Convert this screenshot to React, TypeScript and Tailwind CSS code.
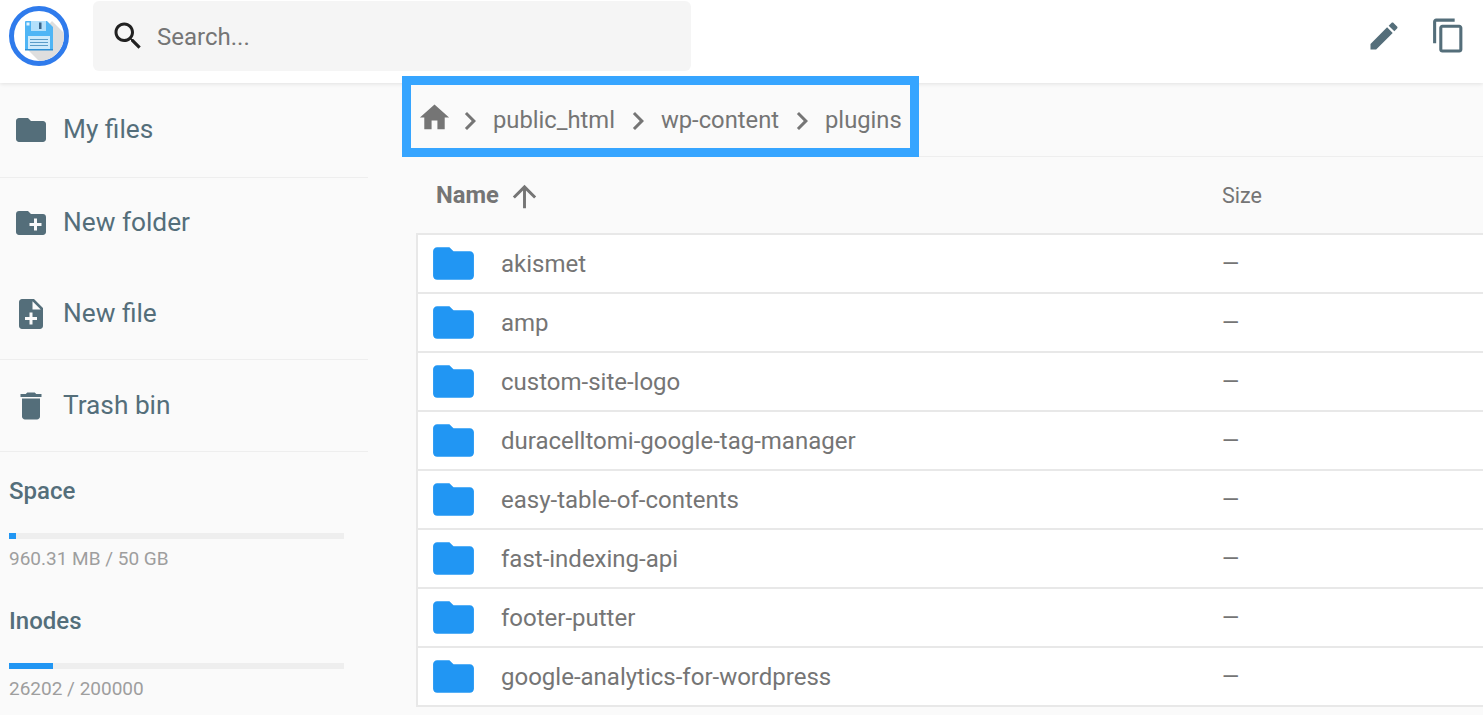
import React from 'react';

const paths = {
  folder: 'M10 4H4c-1.1 0-2 .9-2 2v12c0 1.1.9 2 2 2h16c1.1 0 2-.9 2-2V8c0-1.1-.9-2-2-2h-8l-2-2z',
  newFolder: 'M20 6h-8l-2-2H4c-1.11 0-1.99.89-1.99 2L2 18c0 1.11.89 2 2 2h16c1.11 0 2-.89 2-2V8c0-1.11-.89-2-2-2zm-1 8h-3v3h-2v-3h-3v-2h3V9h2v3h3v2z',
  newFile: 'M14 2H6c-1.1 0-1.99.9-1.99 2L4 20c0 1.1.89 2 1.99 2H18c1.1 0 2-.9 2-2V8l-6-6zm2 14h-3v3h-2v-3H8v-2h3v-3h2v3h3v2zm-3-7V3.5L18.5 9H13z',
  trash: 'M6 19c0 1.1.9 2 2 2h8c1.1 0 2-.9 2-2V7H6v12zM19 4h-3.5l-1-1h-5l-1 1H5v2h14V4z',
  home: 'M10 20v-6h4v6h5v-8h3L12 3 2 12h3v8z',
  search: 'M15.5 14h-.79l-.28-.27C15.41 12.59 16 11.11 16 9.5 16 5.91 13.09 3 9.5 3S3 5.91 3 9.5 5.91 16 9.5 16c1.61 0 3.09-.59 4.23-1.57l.27.28v.79l5 4.99L20.49 19l-4.99-5zm-6 0C7.01 14 5 11.99 5 9.5S7.01 5 9.5 5 14 7.01 14 9.5 11.99 14 9.5 14z',
  edit: 'M3 17.25V21h3.75L17.81 9.94l-3.75-3.75L3 17.25zM20.71 7.04c.39-.39.39-1.02 0-1.41l-2.34-2.34c-.39-.39-1.02-.39-1.41 0l-1.83 1.83 3.75 3.75 1.83-1.83z',
  copy: 'M16 1H4c-1.1 0-2 .9-2 2v14h2V3h12V1zm3 4H8c-1.1 0-2 .9-2 2v14c0 1.1.9 2 2 2h11c1.1 0 2-.9 2-2V7c0-1.1-.9-2-2-2zm0 16H8V7h11v14z',
  up: 'M4 12l1.41 1.41L11 7.83V20h2V7.83l5.58 5.59L20 12l-8-8-8 8z',
  chevron: 'M10 6L8.59 7.41 13.17 12l-4.58 4.59L10 18l6-6z',
};

const Icon = ({ d, className }: { d: string; className: string }) => (
  <svg viewBox="0 0 24 24" fill="currentColor" className={`shrink-0 ${className}`}>
    <path d={d} />
  </svg>
);

const Logo = () => (
  <div className="flex h-[60px] w-[60px] items-center justify-center overflow-hidden rounded-full border-[5px] border-[#2f7bec] bg-white">
    <svg viewBox="0 0 50 50" className="h-[50px] w-[50px]">
      <path d="M13 38 L38 10 L50 22 L50 50 L25 50 Z" fill="#dedede" />
      <path d="M12 10h21l6 6v22a1 1 0 0 1-1 1H12a1 1 0 0 1-1-1V11a1 1 0 0 1 1-1z" fill="#4fb5f5" />
      <rect x="17" y="10" width="15" height="10" fill="#b3e0fb" />
      <rect x="25" y="11.5" width="2.5" height="6.5" fill="#37648a" />
      <rect x="12.5" y="11.5" width="3" height="3" fill="#e3f4fe" />
      <rect x="14" y="25" width="22" height="13" fill="#cdeafc" />
      <rect x="16" y="28" width="18" height="1" fill="#5a9cc8" />
      <rect x="16" y="31" width="18" height="1" fill="#5a9cc8" />
      <rect x="16" y="34" width="18" height="1" fill="#5a9cc8" />
      <rect x="11" y="38" width="28" height="1.5" fill="#2c8fd6" />
    </svg>
  </div>
);

const SideItem = ({ d, label, height, line }: { d: string; label: string; height: string; line?: boolean }) => (
  <div className={`flex items-center ${height} ${line ? 'border-b border-[#eeeeee]' : ''}`}>
    <div className="flex w-[63px] justify-center pr-[1px]">
      <Icon d={d} className="h-9 w-9" />
    </div>
    <span className="text-[26.25px] text-[#546e7a]">{label}</span>
  </div>
);

const Meter = ({ title, pct, text }: { title: string; pct: number; text: string }) => (
  <div className="h-[130px] pl-[9px]">
    <div className="text-[24px] leading-[30px] font-medium text-[#546e7a]">{title}</div>
    <div className="mt-[27px] h-[6px] w-[335px] bg-[#eeeeee]">
      <div className="h-full bg-[#2196f3]" style={{ width: `${pct}%` }} />
    </div>
    <div className="mt-[7px] text-[19px] leading-[26px] text-[#9e9e9e]">{text}</div>
  </div>
);

const Crumb = ({ label }: { label: string }) => (
  <>
    <Icon d={paths.chevron} className="h-9 w-9 text-[#757575]" />
    <span className="px-[5px] text-[23.75px] whitespace-nowrap text-[#757575]">{label}</span>
  </>
);

const plugins = [
  'akismet',
  'amp',
  'custom-site-logo',
  'duracelltomi-google-tag-manager',
  'easy-table-of-contents',
  'fast-indexing-api',
  'footer-putter',
  'google-analytics-for-wordpress',
];

export default function App() {
  return (
    <div className="flex h-[715px] w-full flex-col overflow-hidden bg-[#fafafa] font-['Roboto',sans-serif]">
      <header className="relative z-10 flex h-[83px] shrink-0 items-start bg-white shadow-[0_1px_4px_rgba(0,0,0,0.1)]">
        <div className="mt-[6px] ml-[9px]">
          <Logo />
        </div>
        <div className="mt-[1px] ml-[24px] flex h-[70px] w-[598px] items-center rounded-[6px] bg-[#f5f5f5] pl-[17px]">
          <Icon d={paths.search} className="h-9 w-9 text-[#212121]" />
          <span className="mt-[2px] ml-[11px] text-[24px] text-[#757575]">Search...</span>
        </div>
        <div className="mt-[17px] ml-auto flex items-center gap-[28px] pr-[16px] text-[#546e7a]">
          <Icon d={paths.edit} className="h-9 w-9" />
          <Icon d={paths.copy} className="h-[37px] w-[37px]" />
        </div>
      </header>

      <div className="flex min-h-0 flex-1">
        <aside className="w-[368px] shrink-0 text-[#546e7a]">
          <SideItem d={paths.folder} label="My files" height="h-[95px]" line />
          <SideItem d={paths.newFolder} label="New folder" height="h-[90px]" />
          <SideItem d={paths.newFile} label="New file" height="h-[92px]" line />
          <SideItem d={paths.trash} label="Trash bin" height="h-[92px]" line />
          <div className="pt-[24px]">
            <Meter title="Space" pct={2} text="960.31 MB / 50 GB" />
            <Meter title="Inodes" pct={13} text="26202 / 200000" />
          </div>
        </aside>

        <main className="min-w-0 flex-1 pl-[48px]">
          <div className="flex h-[74px] items-start border-b border-[#eeeeee]">
            <div className="relative z-20 -mt-[7px] -ml-[14px] flex h-[81px] w-[517px] items-center border-[9px] border-[#36a5ff] bg-[#fafafa] pt-[8px] pl-[6px]">
              <Icon d={paths.home} className="-mt-[6px] h-[35px] w-[35px] text-[#757575]" />
              <Crumb label="public_html" />
              <Crumb label="wp-content" />
              <Crumb label="plugins" />
            </div>
          </div>
          <div className="flex h-[76px] items-center pt-[2px]">
            <div className="flex w-[806px] items-center pl-[20px] text-[#757575]">
              <span className="text-[23.75px] font-bold">Name</span>
              <Icon d={paths.up} className="ml-[8px] h-[35px] w-[35px]" />
            </div>
            <span className="text-[21.5px] text-[#757575]">Size</span>
          </div>
          <div className="border-t-2 border-l-2 border-[#e8e8e8] bg-white">
            {plugins.map((name) => (
              <div key={name} className="flex h-[59px] items-center border-b-2 border-[#e8e8e8]">
                <div className="flex w-[83px] pl-[11px]">
                  <Icon d={paths.folder} className="h-[49px] w-[49px] text-[#2196f3]" />
                </div>
                <span className="w-[721px] text-[24px] text-[#757575]">{name}</span>
                <span className="text-[22px] text-[#757575]">—</span>
              </div>
            ))}
          </div>
        </main>
      </div>
    </div>
  );
}
